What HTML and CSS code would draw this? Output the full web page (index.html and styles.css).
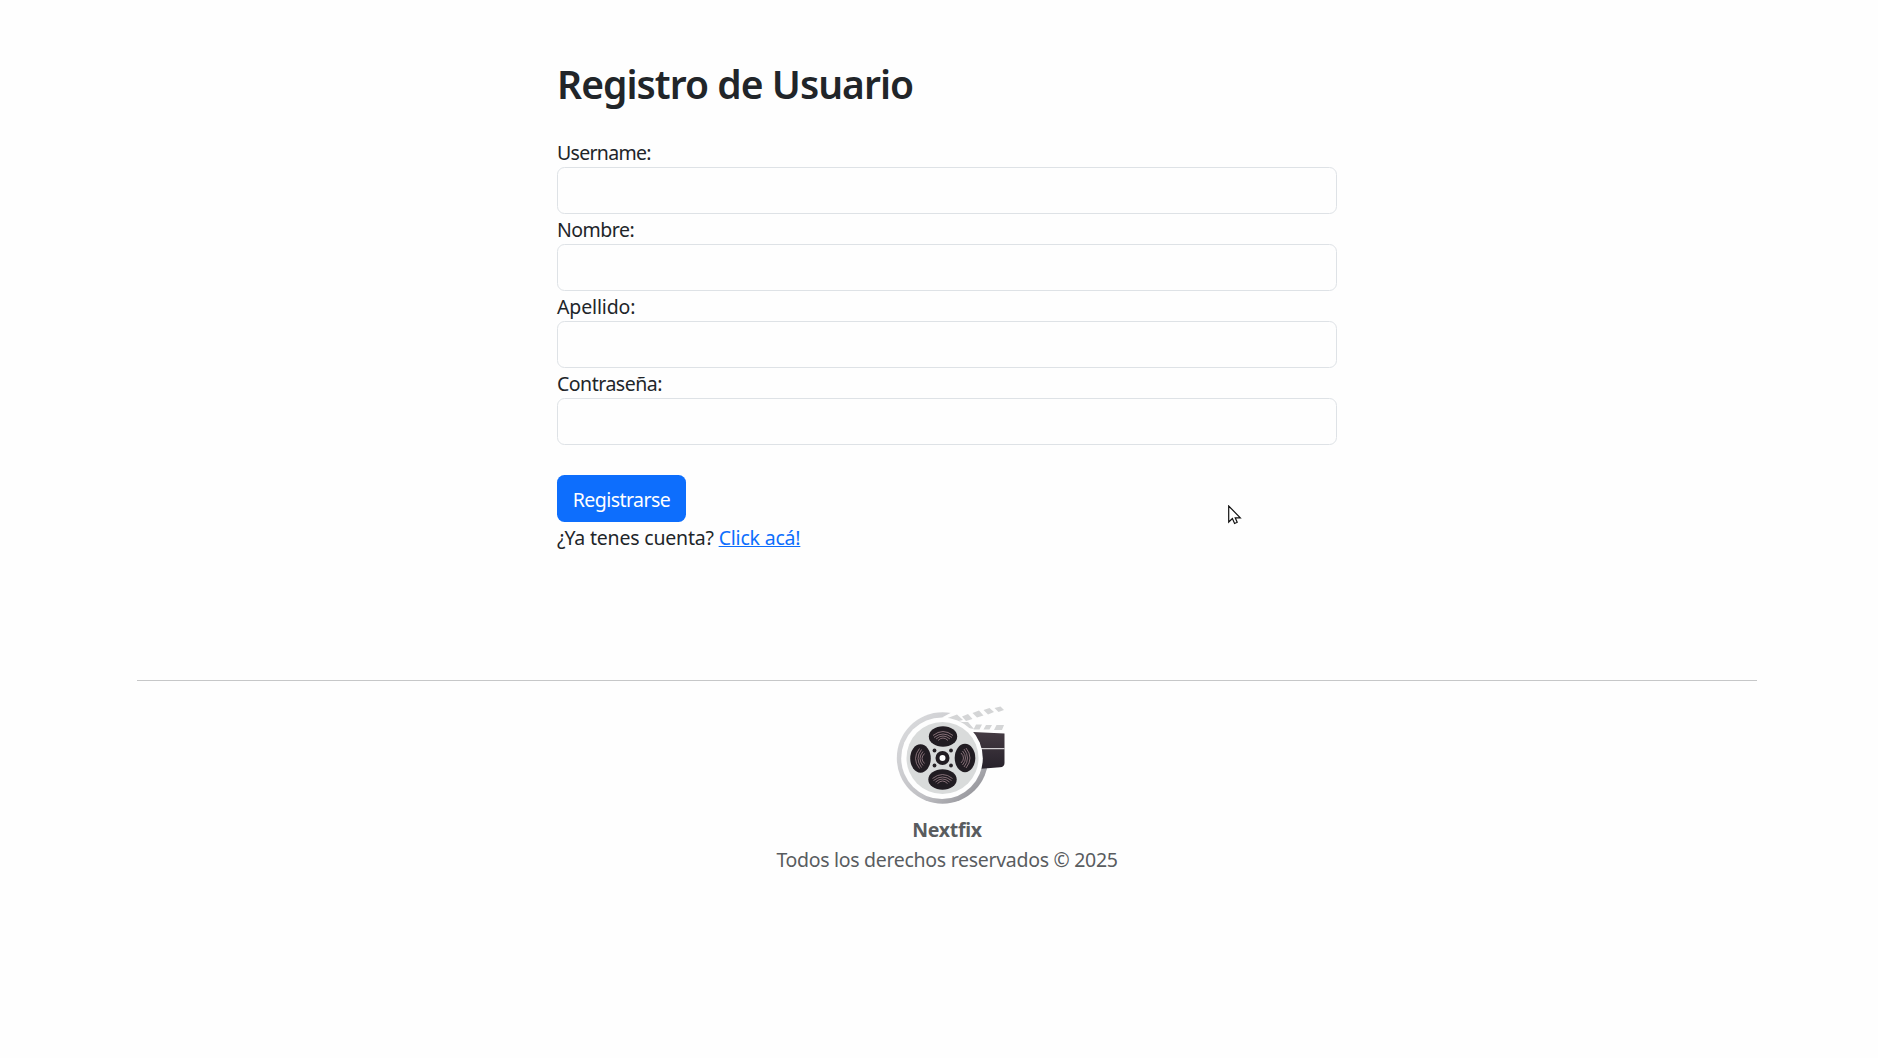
FILE: index.html
```html
<!DOCTYPE html>
<html lang="es">
<head>
<meta charset="utf-8">
<title>Registro de Usuario</title>
<link rel="stylesheet" href="styles.css">
</head>
<body>
<main class="register">
  <h1 class="title">Registro de Usuario</h1>
  <form class="form">
    <label class="label label-username" for="username"><span>Username:</span></label>
    <input class="input" id="username" type="text">
    <label class="label" for="nombre"><span>Nombre:</span></label>
    <input class="input" id="nombre" type="text">
    <label class="label label-apellido" for="apellido"><span>Apellido:</span></label>
    <input class="input" id="apellido" type="text">
    <label class="label" for="password"><span>Contraseña:</span></label>
    <input class="input" id="password" type="password">
    <button class="button" type="button">Registrarse</button>
  </form>
  <p class="login">¿Ya tenes cuenta? <a class="link" href="#">Click acá!</a></p>
</main>
<footer class="footer">
  <svg class="logo" viewBox="0 0 140 120" width="140" height="120" aria-hidden="true">
    <defs>
      <linearGradient id="rim" x1="0" y1="0" x2="1" y2="1"><stop offset="0" stop-color="#dedfe1"/><stop offset=".6" stop-color="#c0c0c4"/><stop offset="1" stop-color="#85858b"/></linearGradient>
      <linearGradient id="board" x1="0" y1="0" x2="0" y2="1"><stop offset="0" stop-color="#453b43"/><stop offset="1" stop-color="#27222b"/></linearGradient>
      <g id="hole">
        <ellipse rx="14.2" ry="10.3" fill="#211c22"/>
        <path fill="none" stroke="#a58a92" stroke-width=".75" d="M-10-1Q0-9 10-1M-9 1Q0-6 9 1M-7 2.500Q0-3.500 7 2.500M-5 4Q0-1 5 4"/>
      </g>
    </defs>
    <circle cx="62.500" cy="63" r="45.700" fill="url(#rim)"/>
    <path d="M76 15L110 20V60H98L82 27L62 22.500Z" fill="#fefefe"/>
    <path d="M93 37L124.500 38.500V68Q124.500 72 120 72.300L98 74Z" fill="url(#board)"/>
    <path d="M98 53.700H124.500" stroke="#f4f2f4" stroke-width="1"/>
    <g fill="#d4d5d6">
      <path d="M65 24L77 19.500L83 25L74 27Z"/>
      <path d="M82 21.500L88 19L92.500 24L86 26Z"/>
      <path d="M92.500 18L99 15.500L103.500 20.500L97 22.500Z"/>
      <path d="M103.500 15L109.500 13L114 17L108 19.500Z"/>
      <path d="M114.500 13L120.500 11.500L124 15L118.500 17Z"/>
      <path d="M80 27H88L94 34L88 33Z"/>
      <path d="M96 29.500H102L99.500 34.500H93.500Z"/>
      <path d="M106 30H112L109.500 34.500H103.500Z"/>
      <path d="M116.500 30H124L122 35H114Z"/>
    </g>
    <circle cx="62" cy="63.200" r="40.800" fill="#fefefe"/>
    <circle cx="62.500" cy="63" r="36" fill="#d9dbdb"/>
    <use href="#hole" x="63" y="41.500"/>
    <use href="#hole" x="62.500" y="84.500"/>
    <use href="#hole" transform="translate(40.500 63.500) rotate(-90)"/>
    <use href="#hole" transform="translate(85 63) rotate(90)"/>
    <g fill="#262126"><circle cx="54.500" cy="55.500" r="1.900"/><circle cx="71" cy="55.500" r="1.900"/><circle cx="54.500" cy="70.500" r="1.900"/><circle cx="71" cy="70.500" r="1.900"/></g>
    <circle cx="62.500" cy="63" r="5" fill="#fefefe" stroke="#211c22" stroke-width="4"/>
  </svg>
  <div class="brand">Nextfix</div>
  <div class="rights">Todos los derechos reservados © 2025</div>
</footer>
<svg class="cursor" viewBox="0 0 14 20" width="14" height="20" aria-hidden="true"><path d="M.7 1V17L4.400 13.500L6.600 18.500L9.200 17.300L7.200 12.800H12.300Z" fill="#fff" stroke="#111" stroke-width="1.200"/></svg>
</body>
</html>
```
FILE: styles.css
```css
* { box-sizing: border-box; }
body {
  margin: 0;
  height: 1058px;
  background: #fefefe;
  color: #212529;
  font: 380 19.500px/30px "Noto Sans", sans-serif;
  position: relative;
  overflow: hidden;
}
.register { width: 780px; height: 680px; margin-left: 557px; padding-top: 60px; }
.title { margin: 0 0 29px; font-size: 39px; line-height: 48px; font-weight: 560; letter-spacing: -.95px; white-space: nowrap; }
.form { display: flex; flex-direction: column; }
.label { height: 30px; padding-top: 1px; letter-spacing: -.5px; }
.label-username { letter-spacing: -.7px; }
.label-apellido { letter-spacing: -.15px; }
.input { width: 780px; height: 47px; border: 1px solid #dee2e6; border-radius: 7.500px; background: #fefefe; padding: 7px 15px; font: inherit; }
.button { width: 129px; height: 47px; margin-top: 30px; border: 0; border-radius: 7.500px; padding: 3px 0 0; background: #0d6efd; color: #fff; font: inherit; letter-spacing: -.55px; white-space: nowrap; }
.login { margin: 0; padding-top: 1px; letter-spacing: -.2px; }
.link { color: #0d6efd; text-decoration: underline; }
.footer { width: 1620px; margin-left: 137px; border-top: 1px solid #c6c7c8; padding-top: 14px; display: flex; flex-direction: column; align-items: center; color: #595c5f; }
.logo { display: block; margin-left: 6px; }
.brand { font-weight: 700; letter-spacing: -.25px; }
.rights { letter-spacing: -.3px; }
.cursor { position: absolute; left: 1228px; top: 505px; }
```
